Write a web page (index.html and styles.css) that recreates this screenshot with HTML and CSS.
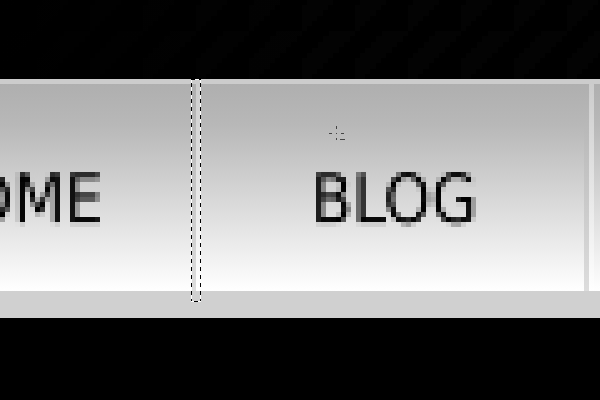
FILE: index.html
```html
<!DOCTYPE html>
<html lang="en">
<head>
<meta charset="utf-8">
<title>Navigation</title>
<link rel="stylesheet" href="styles.css">
</head>
<body>
<header class="texture">
<svg width="100%" height="100%" aria-hidden="true">
<defs>
<pattern id="weave" x="37" y="-22" width="53" height="53" patternUnits="userSpaceOnUse"><path d="M0 53V27h5v-5h5v-5h6v-6h5V5h6V0h26v5h-5v6h-6v5h-5v6h-6v5h-5v5h-5v6h-6v5h-5v5h-5v5z" fill="#030303"/></pattern>
<linearGradient id="fade"><stop offset="0" stop-color="#000"/><stop offset="1" stop-color="#000" stop-opacity="0"/></linearGradient>
<filter id="pixelate" x="0" y="0" width="100%" height="100%" color-interpolation-filters="sRGB">
<feGaussianBlur in="SourceGraphic" stdDeviation="1" result="soft"/>
<feFlood x="2" y="4" width="1" height="1" flood-color="#000"/>
<feComposite x="0" y="2" width="5" height="5" operator="over" in2="SourceGraphic" result="cell"/>
<feTile in="cell" result="grid"/>
<feComposite in="soft" in2="grid" operator="in"/>
<feMorphology operator="dilate" radius="2"/>
</filter>
</defs>
<rect width="100%" height="100%" fill="url(#weave)"/>
<rect width="60%" height="100%" fill="url(#fade)"/>
</svg>
</header>
<nav class="bar">
<a class="tab tab-home" href="#home"><span class="label">HOME</span></a>
<span class="divider"><span class="marquee"></span></span>
<a class="tab tab-blog" href="#blog"><span class="label">BLOG</span></a>
<span class="divider"></span>
<span class="tab-next"></span>
<svg class="cursor" width="16" height="14" viewBox="0 0 16 14" aria-hidden="true" shape-rendering="crispEdges"><path d="M7 0h1v3H7zM0 7h3v1H0zM7 7h1v1H7zM12 7h3v1h-3zM7 12h1v2H7zM11 13h5v1h-5z" fill="#444"/></svg>
</nav>
</body>
</html>
```
FILE: styles.css
```css
body {
  margin: 0;
  min-height: 100vh;
  background: #000;
  font-family: "DejaVu Sans Condensed", "DejaVu Sans", sans-serif;
}

.texture {
  height: 79px;
}

.texture svg {
  display: block;
}

.bar {
  position: relative;
  display: flex;
  height: 207px;
  border-top: 5px solid #ccc;
  border-bottom: 27px solid #d0d0d0;
  background: linear-gradient(#afafaf, #b8b8b8 20%, #fff);
}

.tab {
  display: flex;
  align-items: center;
  padding-top: 24px;
  box-sizing: border-box;
  color: #000;
  font-size: 67px;
  line-height: 80px;
  text-decoration: none;
}

.label {
  filter: url(#pixelate);
}

.tab-home {
  justify-content: flex-end;
  width: 191px;
  padding-right: 88px;
  overflow: hidden;
}

.tab-blog {
  flex: 1;
  justify-content: center;
  padding-left: 4px;
}

.divider {
  position: relative;
  width: 10px;
  background:
    linear-gradient(#afafaf, #ddd) left / 5px 100% no-repeat,
    linear-gradient(#ccc, #fff) right / 5px 100% no-repeat;
}

.tab-next {
  width: 6px;
}

.marquee {
  position: absolute;
  top: -5px;
  right: 0;
  bottom: -11px;
  left: 0;
  background:
    repeating-linear-gradient(90deg, #000 0 4px, #fff 4px 8px) top / 100% 1px no-repeat,
    repeating-linear-gradient(90deg, #fff 0 3px, #000 3px 7px) bottom / 100% 1px no-repeat,
    repeating-linear-gradient(#fff 0 4px, #000 4px 8px) left / 1px 100% no-repeat,
    repeating-linear-gradient(#fff 0 4px, #000 4px 8px) right / 1px 100% no-repeat;
}

.cursor {
  position: absolute;
  top: 42px;
  left: 329px;
}
```
